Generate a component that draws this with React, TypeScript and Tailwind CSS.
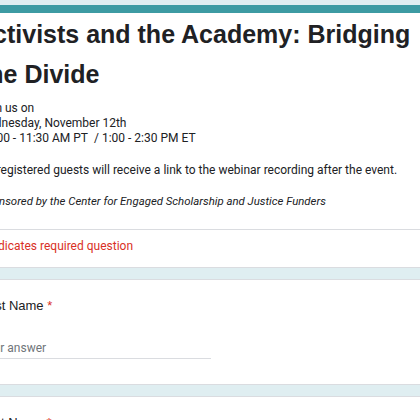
export default function App() {
  return (
    <div className="w-[420px] h-[420px] overflow-hidden bg-[#dfeef1]" style={{ fontFamily: "Roboto, 'Liberation Sans', sans-serif" }}>
      <div className="ml-[-45px] w-[500px] pt-[5px] flex flex-col gap-[11px]">
        <div className="bg-white border border-[#dadce0] border-t-0 rounded-[8px] overflow-hidden">
          <div className="h-[8px] bg-[#3d9ba3]" />
          <div className="pl-[24px] pr-[24px]">
            <h1 className="ml-[-5px] text-[25px] leading-[40px] font-bold text-[#202124] pt-[1px] whitespace-nowrap" style={{ fontFamily: "'Liberation Sans', Arial, sans-serif" }}>
              <span className="block">Activists and the Academy: Bridging</span>
              <span className="block ml-[5px]">the Divide</span>
            </h1>
            <div className="mt-[7px] text-[12px] leading-[15px] text-[#202124] pb-[20px]">
              <p className="ml-[-1px]">Join us on</p>
              <p className="ml-[-2px]">Wednesday, November 12th</p>
              <p>10:00 - 11:30 AM PT&nbsp; / 1:00 - 2:30 PM ET</p>
              <p className="mt-[17px]">All registered guests will receive a link to the webinar recording after the event.</p>
              <p className="mt-[16px] italic text-[11.4px]">Sponsored by the Center for Engaged Scholarship and Justice Funders</p>
            </div>
          </div>
          <div className="border-t border-[#dadce0] pl-[24px] pt-[9px] pb-[13px] text-[12px] leading-[15px] text-[#d93025]">
            * Indicates required question
          </div>
        </div>
        <div className="bg-white border border-[#dadce0] rounded-[8px] pl-[24px] pt-[16px] pb-[25px]">
          <div className="text-[13px] leading-[20px] text-[#202124]" style={{ fontFamily: "'Liberation Sans', Arial, sans-serif" }}>
            First Name <span className="text-[#d93025]">*</span>
          </div>
          <div className="mt-[22px] w-[231px] border-b border-[#dadce0] text-[12px] leading-[20px] text-[#70757a]">
            Your answer
          </div>
        </div>
        <div className="bg-white border border-[#dadce0] rounded-[8px] pl-[24px] pt-[16px] pb-[25px]">
          <div className="text-[13px] leading-[20px] text-[#202124]" style={{ fontFamily: "'Liberation Sans', Arial, sans-serif" }}>
            Last Name <span className="text-[#d93025]">*</span>
          </div>
          <div className="mt-[22px] w-[231px] border-b border-[#dadce0] text-[12px] leading-[20px] text-[#70757a]">
            Your answer
          </div>
        </div>
      </div>
    </div>
  );
}
